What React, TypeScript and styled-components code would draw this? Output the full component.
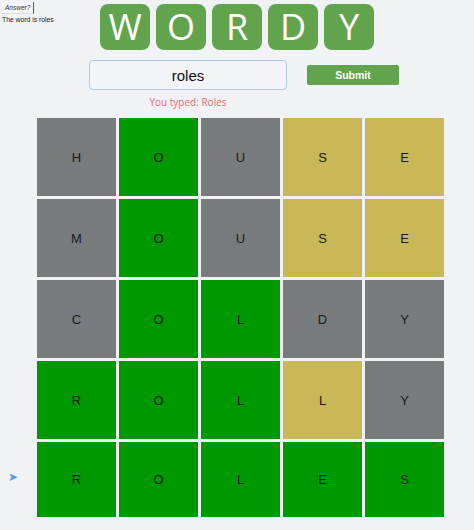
import React from "react";
import styled, { createGlobalStyle } from "styled-components";

const Global = createGlobalStyle`
  html, body { margin: 0; padding: 0; background: #f1f2f6; }
  body { font-family: "Liberation Sans", Arial, sans-serif; }
  * { box-sizing: border-box; }
`;

const Page = styled.div`
  width: 474px;
  height: 530px;
  background: #f1f2f6;
  overflow: hidden;
`;

const Header = styled.div`
  display: grid;
  grid-template-columns: 1fr auto 1fr;
  align-items: start;
  padding-top: 4px;
`;

const AnswerBox = styled.div`
  display: flex;
  flex-direction: column;
  align-items: flex-start;
  padding-left: 2px;
  margin-top: -2px;
`;

const AnswerButton = styled.button`
  font-family: "Liberation Sans", Arial, sans-serif;
  font-style: italic;
  font-size: 6.5px;
  padding: 1px 3px;
  height: 12px;
  background: #f7f7f9;
  border: none;
  border-right: 1px solid #555;
  border-bottom: 1px solid #ddd;
  color: #333;
`;

const AnswerText = styled.div`
  font-size: 6.8px;
  color: #222;
  margin-top: 2px;
`;

const Title = styled.div`
  display: flex;
  gap: 6px;
`;

const TitleTile = styled.div`
  width: 50px;
  height: 46px;
  border-radius: 8px;
  background: #62a44e;
  color: #fff;
  font-family: "Open Sans", "Noto Sans", sans-serif;
  font-size: 36px;
  line-height: 46px;
  text-align: center;
`;

const FormRow = styled.div`
  display: flex;
  justify-content: center;
  align-items: flex-start;
  gap: 20px;
  margin-top: 10px;
  padding-left: 14px;
`;

const InputCol = styled.div`
  display: flex;
  flex-direction: column;
  align-items: center;
`;

const Input = styled.input`
  width: 198px;
  height: 30px;
  border: 1.5px solid #a9cbe6;
  border-radius: 4px;
  background: #f3f4f8;
  text-align: center;
  font-family: "Liberation Sans", Arial, sans-serif;
  font-size: 15px;
  color: #111;
  outline: none;
`;

const Message = styled.div`
  margin-top: 5px;
  font-family: "Open Sans", "Noto Sans", sans-serif;
  font-size: 10px;
  color: #ea6a78;
`;

const SubmitButton = styled.button`
  margin-top: 5px;
  width: 92px;
  height: 20px;
  border: none;
  border-radius: 2px;
  background: #62a44e;
  color: #fff;
  font-family: "Liberation Sans", Arial, sans-serif;
  font-weight: bold;
  font-size: 10.5px;
`;

const Board = styled.div`
  display: grid;
  grid-template-rows: repeat(4, 78px) 75px;
  row-gap: 3px;
  margin-top: 9px;
`;

const Row = styled.div`
  display: flex;
  align-items: stretch;
`;

const Marker = styled.div`
  width: 37px;
  padding-left: 8px;
  display: flex;
  align-items: center;
  padding-bottom: 6px;
  color: #4f9ae6;
  font-size: 12px;
`;

const Cells = styled.div`
  display: flex;
  gap: 3px;
`;

const colors: Record<string, string> = {
  g: "#009800",
  y: "#c9b857",
  x: "#787b7e",
};

const Cell = styled.div<{ $state: string }>`
  width: 79px;
  background: ${(p) => colors[p.$state]};
  display: flex;
  align-items: center;
  justify-content: center;
  font-family: "Liberation Sans", Arial, sans-serif;
  font-size: 13px;
  color: #1a1a1a;
`;

const rows: { w: string; s: string }[] = [
  { w: "HOUSE", s: "xgxyy" },
  { w: "MOUSE", s: "xgxyy" },
  { w: "COLDY", s: "xggxx" },
  { w: "ROLLY", s: "gggyx" },
  { w: "ROLES", s: "ggggg" },
];

export default function App() {
  return (
    <Page>
      <Global />
      <Header>
        <AnswerBox>
          <AnswerButton>Answer?</AnswerButton>
          <AnswerText>The word is roles</AnswerText>
        </AnswerBox>
        <Title>
          {"WORDY".split("").map((c, i) => (
            <TitleTile key={i}>{c}</TitleTile>
          ))}
        </Title>
        <div />
      </Header>
      <FormRow>
        <InputCol>
          <Input defaultValue="roles" />
          <Message>You typed: Roles</Message>
        </InputCol>
        <SubmitButton>Submit</SubmitButton>
      </FormRow>
      <Board>
        {rows.map((r, i) => (
          <Row key={i}>
            <Marker>{i === rows.length - 1 ? "➤" : ""}</Marker>
            <Cells>
              {r.w.split("").map((c, j) => (
                <Cell key={j} $state={r.s[j]}>
                  {c}
                </Cell>
              ))}
            </Cells>
          </Row>
        ))}
      </Board>
    </Page>
  );
}
